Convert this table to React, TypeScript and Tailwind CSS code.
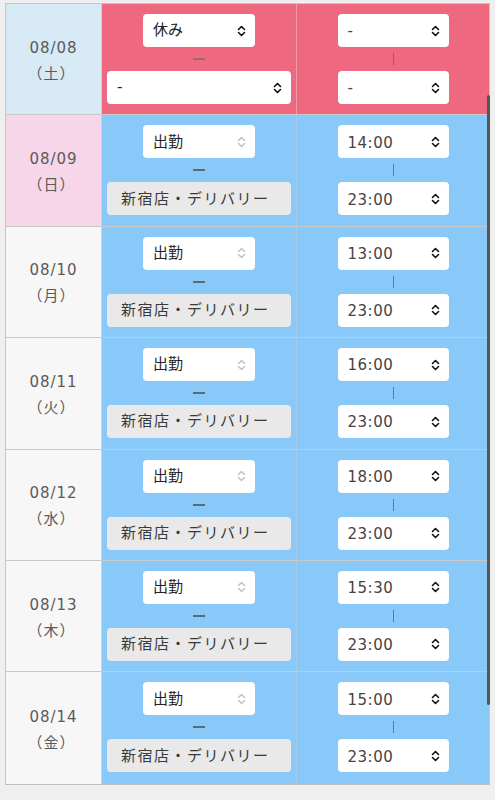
import React from "react";

type Row={date:string;dow:string;kind:"off"|"work";dateBg:string;start:string;end:string};

const rows:Row[]=[
  {date:"08/08",dow:"（土）",kind:"off",dateBg:"bg-[#d8e9f6]",start:"-",end:"-"},
  {date:"08/09",dow:"（日）",kind:"work",dateBg:"bg-[#f6d6e8]",start:"14:00",end:"23:00"},
  {date:"08/10",dow:"（月）",kind:"work",dateBg:"bg-[#f7f7f7]",start:"13:00",end:"23:00"},
  {date:"08/11",dow:"（火）",kind:"work",dateBg:"bg-[#f7f7f7]",start:"16:00",end:"23:00"},
  {date:"08/12",dow:"（水）",kind:"work",dateBg:"bg-[#f7f7f7]",start:"18:00",end:"23:00"},
  {date:"08/13",dow:"（木）",kind:"work",dateBg:"bg-[#f7f7f7]",start:"15:30",end:"23:00"},
  {date:"08/14",dow:"（金）",kind:"work",dateBg:"bg-[#f7f7f7]",start:"15:00",end:"23:00"},
];

const font={fontFamily:'Verdana, "DejaVu Sans", "Noto Sans CJK JP", sans-serif'};

function Chevron({light}:{light?:boolean}){
  return <svg width="9" height="14" viewBox="0 0 9 14" fill="none" stroke={light?"#c4c4c4":"#111"} strokeWidth="1.6" strokeLinecap="round" strokeLinejoin="round">
    <path d="M1.5 5.5 L4.5 2.5 L7.5 5.5"/><path d="M1.5 8.5 L4.5 11.5 L7.5 8.5"/>
  </svg>;
}

function Select({value,w,light,time}:{value:string;w:string;light?:boolean;time?:boolean}){
  return <div className={`${w} flex h-[33px] items-center justify-between rounded-[4px] bg-white pl-[10px] pr-[9px]`}>
    <span className={`${time?"pt-[2px] text-[15px] tracking-[0.5px] text-[#444]":"text-[15px] text-[#222]"}`} style={font}>{value}</span>
    <Chevron light={light}/>
  </div>;
}

export default function App(){
  return <div className="relative h-[800px] w-[495px] overflow-hidden bg-[#efefef] pl-[5px] pt-[3px]">
    <div className="w-[485px] border border-[#c6c6c6] border-b-[#bdbdbd]">
      {rows.map((r,i)=>{
        const off=r.kind==="off";
        const bg=off?"bg-[#ee6880]":"bg-[#88c9f9]";
        return <div key={r.date} className={`flex h-[111.4px] ${i<rows.length-1?"border-b border-[#c9c9c9]":""}`}>
          <div className={`${r.dateBg} flex w-[96px] shrink-0 flex-col items-center justify-center border-r border-[#d0d0d0] pt-[3px] text-[15px] leading-[26px] tracking-[1px] text-[#5a5a5a]`} style={font}>
            <span>{r.date}</span>
            <span className="pr-[4px]">{r.dow}</span>
          </div>
          <div className={`${bg} flex w-[195px] shrink-0 flex-col items-center border-r ${off?"border-[#f29aaa]":"border-[#a9cbe6]"} pt-[10px]`}>
            <Select value={off?"休み":"出勤"} w="w-[112px]" light={!off}/>
            <div className="flex h-[24px] items-center"><div className={`h-[2px] w-[12px] ${off?"bg-[#9a6a72]":"bg-[#5a6a76]"}`}/></div>
            {off
              ?<Select value="-" w="w-[184px]"/>
              :<div className="flex h-[33px] w-[184px] items-center rounded-[4px] bg-[#e9e9e9] pl-[14px] text-[15px] tracking-[1.5px] text-[#3a3a3a]" style={font}>新宿店・デリバリー</div>}
          </div>
          <div className={`${bg} flex flex-1 flex-col items-center pt-[10px]`}>
            <Select value={r.start} w="w-[111px]" time/>
            <div className="flex h-[24px] items-center"><div className={`h-[12px] w-[1px] ${off?"bg-[#a4586a]":"bg-[#5a7a96]"}`}/></div>
            <Select value={r.end} w="w-[111px]" time/>
          </div>
        </div>;
      })}
    </div>
    <div className="absolute left-[487px] top-[95px] h-[610px] w-[3px] rounded-full bg-[#555]"/>
  </div>;
}
